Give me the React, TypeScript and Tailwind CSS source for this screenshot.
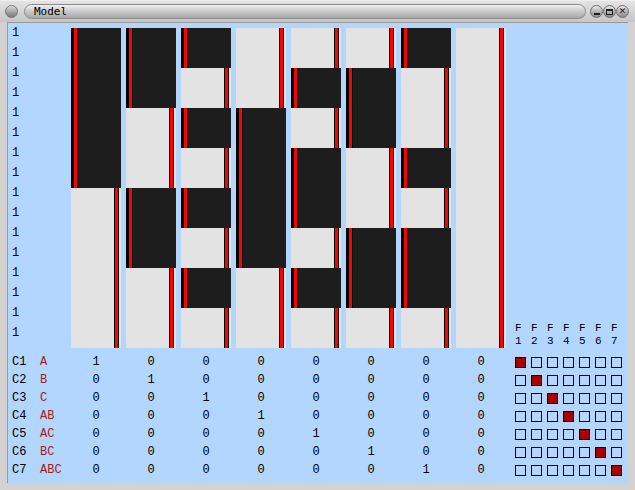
import React from "react";

const A = (r: number) => (r < 8 ? 1 : 0);
const B = (r: number) => (r % 8 < 4 ? 1 : 0);
const C = (r: number) => (r % 4 < 2 ? 1 : 0);
const fns: ((r: number) => number)[] = [
  A,
  B,
  C,
  (r) => A(r) ^ B(r),
  (r) => A(r) ^ C(r),
  (r) => B(r) ^ C(r),
  (r) => A(r) ^ B(r) ^ C(r),
  () => 0,
];

function segs(f: (r: number) => number) {
  const out: { v: number; len: number }[] = [];
  for (let r = 0; r < 16; r++) {
    const v = f(r);
    if (out.length && out[out.length - 1].v === v) out[out.length - 1].len++;
    else out.push({ v, len: 1 });
  }
  return out;
}

function Dark({ h }: { h: number }) {
  return (
    <div className="flex" style={{ height: h }}>
      <div className="w-[3px] bg-black" />
      <div className="w-[3px] bg-[#ff0000]" />
      <div className="w-px bg-black" />
      <div className="flex-1 bg-[#1d1d1d]" />
    </div>
  );
}

function Light({ h }: { h: number }) {
  return (
    <div className="flex" style={{ height: h }}>
      <div className="flex-1 bg-[#e3e3e3]" />
      <div className="w-px bg-black" />
      <div className="w-[3px] bg-[#ff0000]" />
      <div className="w-px bg-black" />
      <div className="w-[2px] bg-[#e3e3e3]" />
    </div>
  );
}

const labels = ["A", "B", "C", "AB", "AC", "BC", "ABC"];
const mono = { fontFamily: '"Liberation Mono", monospace' };

function RoundBtn({ children }: { children?: React.ReactNode }) {
  return (
    <div className="w-[13px] h-[13px] rounded-full border border-[#6f6f6f] bg-gradient-to-b from-[#e8e8e8] via-[#b5b5b5] to-[#8a8a8a] flex items-center justify-center">
      {children}
    </div>
  );
}

export default function App() {
  return (
    <div className="w-[635px] h-[490px] bg-[#d2d2d2] flex flex-col overflow-hidden border-t border-[#efefef]">
      {/* title bar */}
      <div className="h-[21px] flex items-center pl-[5px] pr-[6px] bg-gradient-to-b from-[#e4e4e4] to-[#c6c6c6]">
        <div className="w-[13px] h-[13px] rounded-full border border-[#777] bg-gradient-to-b from-[#dcdcdc] via-[#a8a8a8] to-[#7a7a7a]" />
        <div className="ml-[6px] w-[562px] h-[15px] rounded-full border border-[#8c8c8c] bg-gradient-to-b from-[#f0f0f0] via-[#c9c9c9] to-[#a6a6a6] flex items-center pl-[9px]">
          <span className="text-[11px] leading-none text-black" style={{ fontFamily: '"DejaVu Sans Mono", monospace' }}>
            Model
          </span>
        </div>
        <div className="ml-auto flex gap-0">
          <RoundBtn>
            <div className="w-[6px] h-[2px] bg-[#222] mt-[4px]" />
          </RoundBtn>
          <RoundBtn>
            <div className="w-[7px] h-[6px] border border-[#222] border-t-2" />
          </RoundBtn>
          <RoundBtn>
            <span className="text-[9px] leading-none font-bold text-[#222]" style={{ fontFamily: '"DejaVu Sans", sans-serif' }}>
              ✕
            </span>
          </RoundBtn>
        </div>
      </div>

      {/* content */}
      <div className="mx-[7px] h-[461px] bg-[#b3d6fe] flex flex-col border-l border-t border-[#9a9a9a]">
        {/* top part */}
        <div className="flex h-[325px] pt-[4px]">
          <div className="w-[63px] pl-[4px] flex flex-col" style={mono}>
            {Array.from({ length: 16 }).map((_, i) => (
              <div key={i} className="h-[20px] text-[12px] leading-[12px] text-black">
                1
              </div>
            ))}
          </div>
          <div className="flex gap-[5px] pt-px">
            {fns.map((f, ci) => (
              <div key={ci} className="w-[50px] flex flex-col">
                {segs(f).map((s, si) =>
                  s.v ? <Dark key={si} h={s.len * 20} /> : <Light key={si} h={s.len * 20} />
                )}
              </div>
            ))}
          </div>
          <div className="ml-[9px] flex items-end">
            <div className="flex gap-[5px]" style={mono}>
              {Array.from({ length: 7 }).map((_, i) => (
                <div key={i} className="w-[11px] flex flex-col items-start text-[11px] leading-[13px] text-black">
                  <span className="block h-[13px]">F</span>
                  <span className="block h-[13px]">{i + 1}</span>
                </div>
              ))}
            </div>
          </div>
        </div>

        {/* table */}
        <div className="flex flex-col mt-[5px]">
          {labels.map((lab, ri) => (
            <div key={ri} className="flex h-[18px] items-center">
              <div className="w-[63px] pl-[4px] flex items-center" style={mono}>
                <span className="w-[28px] text-[12px] text-black">C{ri + 1}</span>
                <span className="text-[12px] text-[#a31c1c]">{lab}</span>
              </div>
              <div className="flex gap-[5px]" style={mono}>
                {Array.from({ length: 8 }).map((_, ci) => (
                  <div key={ci} className="w-[50px] text-center text-[12px] text-black">
                    {ci === ri ? 1 : 0}
                  </div>
                ))}
              </div>
              <div className="ml-[9px] flex gap-[5px]">
                {Array.from({ length: 7 }).map((_, ci) => (
                  <div
                    key={ci}
                    className={
                      ci === ri
                        ? "w-[11px] h-[11px] border border-black bg-[#a80000]"
                        : "w-[11px] h-[11px] border border-black"
                    }
                  />
                ))}
              </div>
            </div>
          ))}
        </div>
      </div>
    </div>
  );
}
